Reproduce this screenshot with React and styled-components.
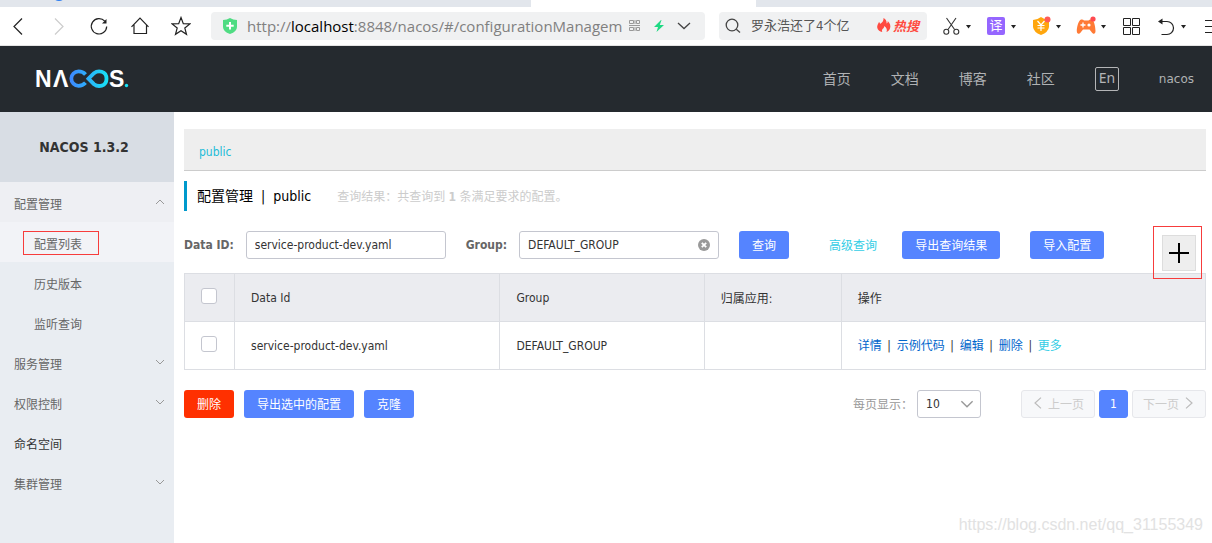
import React, { useState } from 'react';
import styled, { createGlobalStyle } from 'styled-components';

const menus = [
    { name: '配置管理', open: true, children: ['配置列表', '历史版本', '监听查询'] },
    { name: '服务管理', children: [] },
    { name: '权限控制', children: [] },
    { name: '命名空间' },
    { name: '集群管理', children: [] },
];

const navs = ['首页', '文档', '博客', '社区'];

const Chevron = ({ d, size = 10, color = '#999', width = 1 }) => (
    <svg width={size} height={size} viewBox="0 0 10 10" fill="none" stroke={color} strokeWidth={width}>
        <path d={d} />
    </svg>
);

const DOWN = 'M1 3 L5 7 L9 3';
const UP = 'M1 7 L5 3 L9 7';
const LEFT = 'M7.5 0.5 L2.5 5 L7.5 9.5';
const RIGHT = 'M2.5 0.5 L7.5 5 L2.5 9.5';

const Caret = () => (
    <svg width="8" height="20" viewBox="0 0 8 20"><path d="M1 9 H6 L3.5 12.5 Z" fill="#222" /></svg>
);

const Browser = () => {
    const [keyword, setKeyword] = useState('');

    return (
        <>
            <TabStrip>
                <TabFavicon />
                <ActiveTab />
            </TabStrip>
            <Toolbar>
                <NavButtons>
                    <IconButton aria-label="后退">
                        <svg width="20" height="20" viewBox="0 0 20 20" fill="none" stroke="#222" strokeWidth="1.2"><path d="M15 2.5 L7 10.5 L15 18.5" /></svg>
                    </IconButton>
                    <IconButton aria-label="前进">
                        <svg width="20" height="20" viewBox="0 0 20 20" fill="none" stroke="#ccc" strokeWidth="1.2"><path d="M7 2.5 L15 10.5 L7 18.5" /></svg>
                    </IconButton>
                    <IconButton aria-label="刷新">
                        <svg width="20" height="20" viewBox="0 0 20 20" fill="none" stroke="#222" strokeWidth="1.2">
                            <path d="M15.8 5.2 A7.7 7.7 0 1 0 17.7 10.5" />
                            <path d="M17.5 3 V7.5 H13 Z" fill="#222" stroke="none" />
                        </svg>
                    </IconButton>
                    <IconButton aria-label="主页">
                        <svg width="20" height="20" viewBox="0 0 20 20" fill="none" stroke="#222" strokeWidth="1.2"><path d="M1.5 10.8 L10 2.2 L18.5 10.8 M4 8.5 V17.5 H16.5 V8.5" /></svg>
                    </IconButton>
                    <IconButton aria-label="收藏">
                        <svg width="20" height="20" viewBox="0 0 20 20" fill="none" stroke="#222" strokeWidth="1.2"><path d="M10 1.5 L12.3 7.6 L18.9 7.9 L13.8 12 L15.5 18.3 L10 14.7 L4.5 18.3 L6.2 12 L1.1 7.9 L7.7 7.6 Z" /></svg>
                    </IconButton>
                </NavButtons>

                <AddressBar>
                    <svg width="14" height="16" viewBox="0 0 14 16">
                        <path d="M0 2 Q4 2 7 0 Q10 2 14 2 V9 Q14 13.5 7 16 Q0 13.5 0 9 Z" fill="#4fdc83" />
                        <path d="M7 4 V11.5 M3.3 7.7 H10.7" stroke="#fff" strokeWidth="2" />
                    </svg>
                    <Url href="#">http://<b>localhost</b>:8848/nacos/#/configurationManagem</Url>
                    <AddressTools>
                        <svg width="12" height="12" viewBox="0 0 12 12" fill="none" stroke="#999">
                            <path d="M0.5 0.5 H4.5 V3.5 H0.5 Z M7.5 0.5 H10.5 V3.5 H7.5 Z M0.5 7.5 H4.5 V10.5 H0.5 Z M7.5 7.5 H10.5 V10.5 H7.5 Z M0 5.5 H11 M6 0 V4 M6 7 V11" />
                        </svg>
                        <svg width="10" height="12" viewBox="0 0 10 12"><path d="M7 0 L0 7 H4 L2.5 12 L10 5 H5.8 L7.5 0 Z" fill="#1ed983" /></svg>
                        <svg width="14" height="10" viewBox="0 0 14 10" fill="none" stroke="#444" strokeWidth="1.3"><path d="M1 2 L7 7.5 L13 2" /></svg>
                    </AddressTools>
                </AddressBar>

                <HotSearch>
                    <svg width="16" height="16" viewBox="0 0 16 16" fill="none" stroke="#444" strokeWidth="1.3"><circle cx="7" cy="7" r="5.8" /><path d="M11.3 11.3 L15 14.5" /></svg>
                    <SearchInput aria-label="搜索" placeholder="罗永浩还了4个亿" value={keyword} onChange={e => setKeyword(e.target.value)} />
                    <HotLink href="#">
                        <svg width="14" height="14" viewBox="0 0 14 14"><path d="M6.5 0 C10 2 9.5 4.5 9.7 5.5 C10.7 5 10.8 4 10.7 3 C13 5 14 8 13 10.5 C12.3 12.5 11 13.3 9.5 14 C10.5 11.5 9.5 9.5 7.2 8 C7.5 10 5.5 10.5 5 12 C4.8 12.8 5 13.5 5.3 14 C2 13.5 0 11 0.2 8.5 C0.4 6.5 1.5 5.5 2 4 C2.8 4.5 3 5.2 3 6 C5.5 4.5 6.8 2.5 6.5 0 Z" fill="#ff4a40" /></svg>
                        热搜
                    </HotLink>
                </HotSearch>

                <Tools>
                    <Tool aria-label="截图">
                        <svg width="20" height="20" viewBox="0 0 20 20" fill="none" stroke="#333" strokeWidth="1.1">
                            <path d="M5.5 2 L13.6 13.5 M15 2 L7 13.5" />
                            <circle cx="5.3" cy="15.7" r="2.5" /><circle cx="15.3" cy="15.7" r="2.5" />
                        </svg>
                        <Caret />
                    </Tool>
                    <Tool aria-label="翻译"><Translate>译</Translate><Caret /></Tool>
                    <Tool aria-label="钱包">
                        <svg width="20" height="20" viewBox="0 0 20 20">
                            <path d="M2 4 Q7 3.5 10 1 Q13 3.5 18 4 V11 Q17.5 16 10 19 Q2.5 16 2 11 Z" fill="#ffa60d" />
                            <path d="M6.5 5 L10 9 L13.5 5 M10 9 V15 M6.5 9.5 H13.5 M6.5 12 H13.5" fill="none" stroke="#fff" strokeWidth="1.2" />
                            <circle cx="16.5" cy="3.5" r="3" fill="#ff5b57" />
                        </svg>
                        <Caret />
                    </Tool>
                    <Tool aria-label="游戏">
                        <svg width="20" height="20" viewBox="0 0 20 20">
                            <path d="M5 3.5 Q7 3 8 4.5 H12.5 Q13.5 3 16 3.5 C18.5 5 19.5 12 19.5 15 C19.5 18.5 17 18.5 15.5 16 L13.5 13.5 H7 L5 16 C3.5 18.5 0.8 18.5 0.8 15 C0.8 12 2 5 5 3.5 Z" fill="#ff7a35" />
                            <path d="M7 6.5 V11.5 M4.5 9 H9.5" stroke="#fff" strokeWidth="1.3" />
                            <circle cx="13" cy="9" r="1.6" fill="#fff" />
                            <circle cx="17" cy="3" r="2.6" fill="#ff4a4f" />
                        </svg>
                        <Caret />
                    </Tool>
                    <Tool aria-label="应用" $narrow>
                        <svg width="20" height="20" viewBox="0 0 20 20" fill="none" stroke="#222">
                            <path d="M2.5 2.5 H9.5 V9.5 H2.5 Z M11.5 2.5 H18.5 V9.5 H11.5 Z M2.5 11.5 H9.5 V18.5 H2.5 Z M11.5 11.5 H18.5 V18.5 H11.5 Z" />
                        </svg>
                    </Tool>
                    <Tool aria-label="撤销">
                        <svg width="20" height="20" viewBox="0 0 20 20" fill="none" stroke="#222" strokeWidth="1.2">
                            <path d="M4 5.5 H11 A6.3 6.3 0 0 1 11 18.5 H5.5" />
                            <path d="M2 5.5 L6.5 2.5 V8.5 Z" fill="#222" stroke="none" />
                        </svg>
                        <Caret />
                    </Tool>
                    <Tool aria-label="菜单">
                        <svg width="20" height="20" viewBox="0 0 20 20" stroke="#222"><path d="M4 4.5 H20 M4 10.5 H20 M4 16.5 H20" /></svg>
                    </Tool>
                </Tools>
            </Toolbar>
        </>
    );
};

const Logo = () => (
    <svg width="100" height="40" viewBox="-3 -10 100 40" role="img" aria-label="NACOS">
        <defs>
            <linearGradient id="loop" x1="34" x2="73" y1="0" y2="0" gradientUnits="userSpaceOnUse">
                <stop offset="0" stopColor="#3f85ff" />
                <stop offset="1" stopColor="#17e2f5" />
            </linearGradient>
        </defs>
        <LogoText x="0" y="18">N</LogoText>
        <LogoText x="18" y="18">Λ</LogoText>
        <g fill="none" stroke="url(#loop)" strokeWidth="3.8">
            <path d="M50.5 5.5 C48.5 3.2 46.5 2.4 43.5 2.4 A7.2 7.2 0 0 0 43.5 16.8 C46.5 16.8 48.5 16 50.5 13.8" />
            <path d="M53.5 9.7 L59 4.2 C63 1 71.5 1.7 71.5 9.7 C71.5 17.7 63 18.3 59 15.2 Z" />
        </g>
        <LogoText x="74" y="18">S</LogoText>
        <circle cx="91.5" cy="16.5" r="1.7" fill="#17e2f5" />
    </svg>
);

const Sidebar = () => (
    <SideWrap>
        <Version>NACOS 1.3.2</Version>
        {menus.map(menu => (
            <React.Fragment key={menu.name}>
                <MenuItem href="#" $open={menu.open} $leaf={!menu.children}>
                    {menu.name}
                    {menu.children && <Chevron d={menu.open ? UP : DOWN} />}
                </MenuItem>
                {(menu.children || []).map((child, i) => (
                    <SubItem href="#" key={child} $active={i === 0}>
                        {child}
                        {i === 0 && <MenuMark />}
                    </SubItem>
                ))}
            </React.Fragment>
        ))}
    </SideWrap>
);

const App = () => {
    const [dataId, setDataId] = useState('service-product-dev.yaml');
    const [group, setGroup] = useState('DEFAULT_GROUP');

    return (
        <Page>
            <GlobalStyle />
            <Browser />

            <Header>
                <Logo />
                <HeaderNav>
                    {navs.map(nav => <NavLink href="#" key={nav}>{nav}</NavLink>)}
                    <LangButton>En</LangButton>
                    <UserLink href="#">nacos</UserLink>
                </HeaderNav>
            </Header>

            <Body>
                <Sidebar />
                <Main>
                    <Namespace><a href="#">public</a></Namespace>

                    <TitleRow>
                        <Title><span>配置管理</span><span>|</span><span>public</span></Title>
                        <ResultText>查询结果：共查询到 <b>1</b> 条满足要求的配置。</ResultText>
                    </TitleRow>

                    <SearchRow>
                        <Field>
                            <Label htmlFor="dataId">Data ID:</Label>
                            <TextInput id="dataId" value={dataId} onChange={e => setDataId(e.target.value)} />
                        </Field>
                        <Field>
                            <Label htmlFor="group">Group:</Label>
                            <InputWrap>
                                <TextInput id="group" value={group} onChange={e => setGroup(e.target.value)} />
                                <ClearButton aria-label="清除" onClick={() => setGroup('')}>
                                    <svg width="12" height="12" viewBox="0 0 12 12"><circle cx="6" cy="6" r="6" fill="#999" /><path d="M3.8 3.8 L8.2 8.2 M8.2 3.8 L3.8 8.2" stroke="#fff" strokeWidth="1.8" /></svg>
                                </ClearButton>
                            </InputWrap>
                        </Field>
                        <Button>查询</Button>
                        <AdvancedLink href="#">高级查询</AdvancedLink>
                        <ImportGroup>
                            <Button>导出查询结果</Button>
                            <Button>导入配置</Button>
                        </ImportGroup>
                        <AddMark>
                            <AddButton aria-label="新建配置">
                                <svg width="22" height="22" viewBox="0 0 22 22" stroke="#000" strokeWidth="2"><path d="M1 11 H21 M11 1 V21" /></svg>
                            </AddButton>
                        </AddMark>
                    </SearchRow>

                    <Table>
                        <colgroup>
                            <Col $width="50px" />
                            <Col $width="26%" />
                            <Col $width="20%" />
                            <Col $width="137px" />
                            <Col />
                        </colgroup>
                        <thead>
                            <tr>
                                <th><Checkbox type="checkbox" aria-label="全选" /></th>
                                <th>Data Id</th>
                                <th>Group</th>
                                <th>归属应用:</th>
                                <th>操作</th>
                            </tr>
                        </thead>
                        <tbody>
                            <tr>
                                <td><Checkbox type="checkbox" aria-label="service-product-dev.yaml" /></td>
                                <td>service-product-dev.yaml</td>
                                <td>DEFAULT_GROUP</td>
                                <td></td>
                                <td>
                                    <Actions>
                                        <ActionLink href="#">详情</ActionLink><i>|</i>
                                        <ActionLink href="#">示例代码</ActionLink><i>|</i>
                                        <ActionLink href="#">编辑</ActionLink><i>|</i>
                                        <ActionLink href="#">删除</ActionLink><i>|</i>
                                        <ActionLink href="#" $more>更多</ActionLink>
                                    </Actions>
                                </td>
                            </tr>
                        </tbody>
                    </Table>

                    <FooterRow>
                        <Button $warning>删除</Button>
                        <Button>导出选中的配置</Button>
                        <Button>克隆</Button>
                        <Pagination>
                            <PageLabel htmlFor="pageSize">每页显示：</PageLabel>
                            <SelectWrap>
                                <Select id="pageSize" defaultValue="10">
                                    <option>10</option>
                                    <option>20</option>
                                    <option>30</option>
                                </Select>
                                <Chevron d={DOWN} size={14} />
                            </SelectWrap>
                            <Pager>
                                <PageButton disabled><Chevron d={LEFT} size={12} color="#bbb" />上一页</PageButton>
                                <PageButton $current>1</PageButton>
                                <PageButton disabled>下一页<Chevron d={RIGHT} size={12} color="#bbb" /></PageButton>
                            </Pager>
                        </Pagination>
                    </FooterRow>
                </Main>
            </Body>

            <Watermark>https://blog.csdn.net/qq_31155349</Watermark>
        </Page>
    );
};

const GlobalStyle = createGlobalStyle`
    * {
        box-sizing: border-box;
    }
    body {
        margin: 0;
        background-color: #fff;
        color: #333;
        font-family: "DejaVu Sans Condensed", "Noto Sans CJK SC", sans-serif;
        font-size: 12px;
    }
    a {
        text-decoration: none;
    }
    button, input, select {
        font-family: inherit;
        font-size: inherit;
    }
    svg {
        display: block;
        flex-shrink: 0;
    }
`;

const Page = styled.div`
    position: relative;
    display: flex;
    flex-direction: column;
    min-height: 100vh;
    overflow: hidden;
`;

/* 브라우저 영역 */
const TabStrip = styled.div`
    position: relative;
    height: 7px;
    background-color: #e2e6ec;
    overflow: hidden;
`;

const TabFavicon = styled.div`
    position: absolute;
    left: 52px;
    top: -13px;
    width: 14px;
    height: 14px;
    border-radius: 50%;
    background-color: #2b7cf0;
`;

const ActiveTab = styled.div`
    width: 225px;
    height: 7px;
    margin-left: 531px;
    background-color: #fff;
`;

const Toolbar = styled.div`
    display: flex;
    align-items: center;
    height: 39px;
    border-bottom: 1px solid #e4e4e4;
    background-color: #fff;
`;

const NavButtons = styled.div`
    display: flex;
    gap: 21px;
    padding: 0 20px 0 7px;
`;

const IconButton = styled.button`
    width: 20px;
    height: 20px;
    padding: 0;
    border: 0;
    background: none;
`;

const AddressBar = styled.div`
    flex: 1;
    display: flex;
    align-items: center;
    min-width: 0;
    height: 28px;
    padding: 0 14px 0 12px;
    border-radius: 4px;
    background-color: #f0f1f2;
`;

const Url = styled.a`
    flex: 1;
    min-width: 0;
    margin-left: 10px;
    overflow: hidden;
    white-space: nowrap;
    font-family: "Open Sans", sans-serif;
    font-size: 15px;
    line-height: 28px;
    color: #808080;

    b {
        font-weight: 400;
        color: #000;
    }
`;

const AddressTools = styled.div`
    display: flex;
    align-items: center;
    gap: 13px;
`;

const HotSearch = styled.div`
    display: flex;
    align-items: center;
    width: 208px;
    height: 28px;
    margin: 0 14px;
    padding: 0 8px 0 6px;
    border-radius: 4px;
    background-color: #f0f1f2;
`;

const SearchInput = styled.input`
    flex: 1;
    min-width: 0;
    margin-left: 10px;
    padding: 0 0 2px;
    border: 0;
    background: none;
    font-size: 13px;

    &::placeholder {
        color: #555;
    }
`;

const HotLink = styled.a`
    display: flex;
    align-items: center;
    gap: 2px;
    padding-bottom: 2px;
    font-size: 13px;
    font-weight: 700;
    font-style: italic;
    color: #ff4a40;
`;

const Tools = styled.div`
    display: flex;
    flex-shrink: 0;
    width: 271px;
    overflow: hidden;
`;

const Tool = styled.button`
    display: flex;
    flex-shrink: 0;
    align-items: center;
    gap: 4px;
    width: ${props => props.$narrow ? '35px' : '45px'};
    height: 20px;
    padding: 0;
    border: 0;
    background: none;
`;

const Translate = styled.span`
    width: 18px;
    height: 18px;
    margin: 0 1px;
    border-radius: 2px;
    background-color: #9566ff;
    font-size: 13px;
    line-height: 17px;
    text-align: center;
    color: #fff;
`;

/* 헤더 */
const Header = styled.header`
    display: flex;
    align-items: center;
    justify-content: space-between;
    height: 66px;
    padding: 0 18px 0 32px;
    background-color: #252a2f;
`;

const LogoText = styled.text`
    font-family: "Liberation Sans", sans-serif;
    font-size: 23px;
    font-weight: 700;
    fill: #fff;
`;

const HeaderNav = styled.nav`
    display: flex;
    align-items: center;
    gap: 40px;
`;

const NavLink = styled.a`
    padding-bottom: 2px;
    font-size: 14px;
    color: #b0b2b4;
`;

const LangButton = styled.button`
    display: flex;
    justify-content: center;
    width: 24px;
    height: 24px;
    padding: 0;
    border: 1px solid #b4b5b7;
    border-radius: 2px;
    background: none;
    font-family: "Noto Sans", sans-serif;
    font-size: 14px;
    line-height: 20px;
    color: #b4b5b7;
`;

const UserLink = styled.a`
    font-family: "DejaVu Sans", sans-serif;
    font-size: 12px;
    color: #b0b2b4;
`;

/* 사이드 메뉴 */
const Body = styled.div`
    flex: 1;
    display: flex;
`;

const SideWrap = styled.aside`
    flex-shrink: 0;
    width: 174px;
    background-color: #e9edf2;
`;

const Version = styled.div`
    padding-right: 6px;
    background-color: #d8dde4;
    font-size: 14px;
    font-weight: 700;
    line-height: 70px;
    text-align: center;
`;

const MenuItem = styled.a`
    display: flex;
    align-items: center;
    justify-content: space-between;
    height: 40px;
    padding: 2px 9px 0 14px;
    background-color: ${props => props.$open ? '#eeeff3' : 'transparent'};
    color: ${props => props.$leaf ? '#333' : '#666'};

    svg {
        margin-bottom: 2px;
    }
`;

const SubItem = styled.a`
    position: relative;
    display: flex;
    align-items: center;
    height: 40px;
    padding: 2px 0 0 34px;
    background-color: ${props => props.$active ? '#f2f3f7' : 'transparent'};
    color: #666;
`;

const MenuMark = styled.span`
    position: absolute;
    left: 23px;
    top: 9px;
    width: 76px;
    height: 24px;
    border: 1px solid #f73c3c;
`;

/* 본문 */
const Main = styled.main`
    flex: 1;
    min-width: 0;
    padding: 17px 6px 0 10px;
`;

const Namespace = styled.div`
    height: 42px;
    padding: 3px 15px 0;
    border-bottom: 1px solid #ccc;
    background-color: #eee;
    line-height: 40px;

    a {
        color: #22bcd8;
    }
`;

const TitleRow = styled.div`
    display: flex;
    align-items: center;
    gap: 26px;
    height: 30px;
    margin: 10px 0 20px;
    padding: 0 0 2px 10px;
    border-left: 3px solid #09c;
`;

const Title = styled.h1`
    display: flex;
    align-items: baseline;
    gap: 8px;
    margin: 0;
    font-size: 14px;
    font-weight: 400;
    color: #000;
`;

const ResultText = styled.span`
    color: #ccc;
`;

const SearchRow = styled.div`
    position: relative;
    display: flex;
    align-items: center;
    gap: 20px;
    margin-bottom: 14px;
`;

const Field = styled.div`
    display: flex;
    align-items: center;
    gap: 12px;
`;

const Label = styled.label`
    font-weight: 700;
    color: #666;
`;

const InputWrap = styled.div`
    position: relative;
`;

const TextInput = styled.input`
    width: 200px;
    height: 28px;
    padding: 0 8px;
    border: 1px solid #c4c6cf;
    border-radius: 3px;
    color: #333;
`;

const ClearButton = styled.button`
    position: absolute;
    right: 9px;
    top: 8px;
    padding: 0;
    border: 0;
    background: none;
`;

const Button = styled.button`
    height: 28px;
    padding: 0 13px 2px;
    border: 0;
    border-radius: 3px;
    background-color: ${props => props.$warning ? '#ff3000' : '#5584ff'};
    color: #fff;
`;

const AdvancedLink = styled.a`
    margin-left: 20px;
    padding-bottom: 2px;
    color: #33cde5;
`;

const ImportGroup = styled.div`
    display: flex;
    gap: 30px;
    margin-left: 5px;
`;

const AddMark = styled.div`
    position: absolute;
    right: 4px;
    top: -5px;
    padding: 8px 5px 7px 8px;
    border: 1px solid #f73c3c;
`;

const AddButton = styled.button`
    display: flex;
    align-items: center;
    justify-content: center;
    width: 34px;
    height: 36px;
    padding: 0;
    border: 1px solid #ddd;
    background-color: #eee;
`;

const Table = styled.table`
    width: 100%;
    border-collapse: collapse;
    table-layout: fixed;

    th, td {
        height: 48px;
        padding: 0 16px;
        border: 1px solid #dcdee3;
        font-weight: 400;
        text-align: left;
    }
    th {
        background-color: #ebecf0;
    }
`;

const Col = styled.col`
    width: ${props => props.$width || 'auto'};
`;

const Checkbox = styled.input`
    display: block;
    appearance: none;
    width: 16px;
    height: 16px;
    margin: 0 0 4px;
    border: 1px solid #c4c6cf;
    border-radius: 3px;
    background-color: #fff;

    &:checked {
        background-color: #5584ff;
    }
`;

const Actions = styled.div`
    display: flex;
    align-items: baseline;
    gap: 5px;
    padding-bottom: 2px;

    i {
        width: 5px;
        font-style: normal;
        text-align: center;
    }
`;

const ActionLink = styled.a`
    color: ${props => props.$more ? '#33cde5' : '#06c'};
`;

const FooterRow = styled.div`
    display: flex;
    align-items: center;
    gap: 10px;
    margin-top: 20px;
`;

const Pagination = styled.div`
    display: flex;
    align-items: center;
    gap: 4px;
    margin-left: auto;
`;

const PageLabel = styled.label`
    padding-bottom: 2px;
    color: #999;
`;

const SelectWrap = styled.div`
    position: relative;

    svg {
        position: absolute;
        right: 7px;
        top: 7px;
        pointer-events: none;
    }
`;

const Select = styled.select`
    display: block;
    appearance: none;
    width: 64px;
    height: 28px;
    padding: 0 8px;
    border: 1px solid #c4c6cf;
    border-radius: 3px;
    background-color: #fff;
    color: #333;
`;

const Pager = styled.div`
    display: flex;
    gap: 4px;
    margin-left: 36px;
`;

const PageButton = styled.button`
    display: flex;
    align-items: center;
    justify-content: center;
    gap: 4px;
    height: 28px;
    padding: ${props => props.$current ? '0 10px' : '0 10px 2px'};
    border: 1px solid ${props => props.$current ? '#5584ff' : '#e6e7eb'};
    border-radius: 3px;
    background-color: ${props => props.$current ? '#5584ff' : '#f7f8fa'};
    color: ${props => props.$current ? '#fff' : '#ccc'};
`;

const Watermark = styled.div`
    position: absolute;
    right: 9px;
    bottom: 9px;
    font-family: "Liberation Sans", sans-serif;
    font-size: 16px;
    color: #e2e2e2;
`;

export default App;
